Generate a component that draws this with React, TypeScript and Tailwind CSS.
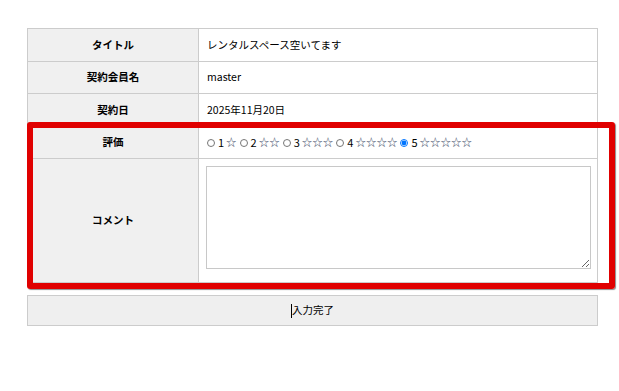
import React from "react";

const font = { fontFamily: '"Noto Sans CJK JP", "Noto Sans", sans-serif' };

type Row = { label: string; h: string; value: React.ReactNode };

function Stars({ n }: { n: number }) {
  return <span className="text-[#4a5670]">{"☆".repeat(n)}</span>;
}

function Rating() {
  const opts = [1, 2, 3, 4, 5];
  return (
    <div className="flex items-center">
      {opts.map((n) => (
        <label key={n} className="flex items-center mr-[3px]">
          <input
            type="radio"
            name="rating"
            defaultChecked={n === 5}
            className="m-0 mr-[3px] w-[8px] h-[8px]"
          />
          <span className="mr-[2px] text-[11px]">{n}</span>
          <Stars n={n} />
        </label>
      ))}
    </div>
  );
}

export default function App() {
  const rows: Row[] = [
    { label: "タイトル", h: "h-[33px]", value: "レンタルスペース空いてます" },
    { label: "契約会員名", h: "h-[32px]", value: "master" },
    { label: "契約日", h: "h-[33px]", value: "2025年11月20日" },
    { label: "評価", h: "h-[32px]", value: <Rating /> },
  ];

  return (
    <div className="relative w-[619px] h-[391px] bg-white text-[10.5px] text-black" style={font}>
      <div className="pt-[28px] pl-[27px]">
        {/* Form table */}
        <div className="w-[571px] border-t border-l border-r border-[#cccccc] grid grid-cols-[171px_1fr]">
          {rows.map((r) => (
            <React.Fragment key={r.label}>
              <div className={`${r.h} bg-[#f0f0f0] border-b border-r border-[#cccccc] flex items-center justify-center font-bold leading-none`}>
                {r.label}
              </div>
              <div className={`${r.h} border-b border-[#cccccc] flex items-center pl-[8px] leading-none`}>
                {r.value}
              </div>
            </React.Fragment>
          ))}
          <div className="h-[124px] bg-[#f0f0f0] border-b border-r border-[#cccccc] flex items-center justify-center font-bold leading-none">
            コメント
          </div>
          <div className="h-[124px] border-b border-[#cccccc] pl-[7px] pt-[7px]">
            <textarea className="block w-[385px] h-[103px] border border-[#c8c8c8] bg-white outline-none" />
          </div>
        </div>

        {/* Submit */}
        <button className="mt-[12px] w-[571px] h-[31px] bg-[#efefef] border border-[#cccccc] flex items-center justify-center leading-none text-black">
          <span className="inline-block w-px h-[14px] bg-black" />
          入力完了
        </button>
      </div>

      {/* Red annotation frame */}
      <div className="absolute left-[27px] top-[122px] w-[588px] h-[167px] border-[6px] border-[#e00000] rounded-[3px] shadow-[1px_1px_1px_rgba(0,0,0,0.45)] pointer-events-none" />
    </div>
  );
}
